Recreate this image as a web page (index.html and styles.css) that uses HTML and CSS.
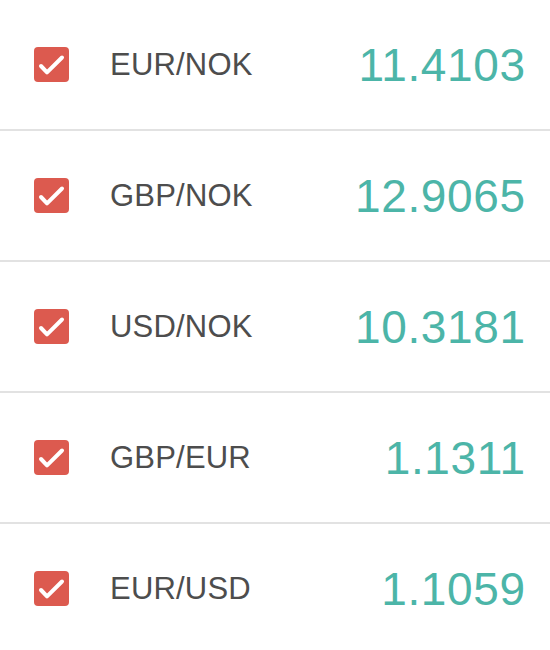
FILE: index.html
```html
<!DOCTYPE html>
<html>
<head>
<meta charset="utf-8">
<link rel="stylesheet" href="styles.css">
</head>
<body>
<ul class="rates">
  <li class="rate">
    <span class="check"><svg viewBox="0 0 35 35" width="35" height="35"><path d="M7 19 L13 25.3 L28 10.5" fill="none" stroke="#fff" stroke-width="4" stroke-linecap="round" stroke-linejoin="round"/></svg></span>
    <span class="pair">EUR/NOK</span>
    <span class="value">11.4103</span>
  </li>
  <li class="rate">
    <span class="check"><svg viewBox="0 0 35 35" width="35" height="35"><path d="M7 19 L13 25.3 L28 10.5" fill="none" stroke="#fff" stroke-width="4" stroke-linecap="round" stroke-linejoin="round"/></svg></span>
    <span class="pair">GBP/NOK</span>
    <span class="value">12.9065</span>
  </li>
  <li class="rate">
    <span class="check"><svg viewBox="0 0 35 35" width="35" height="35"><path d="M7 19 L13 25.3 L28 10.5" fill="none" stroke="#fff" stroke-width="4" stroke-linecap="round" stroke-linejoin="round"/></svg></span>
    <span class="pair">USD/NOK</span>
    <span class="value">10.3181</span>
  </li>
  <li class="rate">
    <span class="check"><svg viewBox="0 0 35 35" width="35" height="35"><path d="M7 19 L13 25.3 L28 10.5" fill="none" stroke="#fff" stroke-width="4" stroke-linecap="round" stroke-linejoin="round"/></svg></span>
    <span class="pair">GBP/EUR</span>
    <span class="value">1.1311</span>
  </li>
  <li class="rate">
    <span class="check"><svg viewBox="0 0 35 35" width="35" height="35"><path d="M7 19 L13 25.3 L28 10.5" fill="none" stroke="#fff" stroke-width="4" stroke-linecap="round" stroke-linejoin="round"/></svg></span>
    <span class="pair">EUR/USD</span>
    <span class="value">1.1059</span>
  </li>
</ul>
</body>
</html>
```
FILE: styles.css
```css
html, body {
  margin: 0;
  padding: 0;
  background: #fff;
}
body {
  font-family: "Liberation Sans", Arial, sans-serif;
}
.rates {
  list-style: none;
  margin: 0;
  padding: 0;
}
.rate {
  display: flex;
  align-items: center;
  height: 129px;
  padding: 0 25px 0 34px;
  border-bottom: 2px solid #e2e2e2;
}
.rate:last-child {
  border-bottom: none;
}
.check {
  width: 35px;
  height: 35px;
  border-radius: 4px;
  background: #dc5a4f;
  display: block;
  flex: none;
}
.check svg {
  display: block;
}
.pair {
  margin-left: 41px;
  font-size: 31px;
  letter-spacing: 0.2px;
  color: #4d4d4d;
  flex: 1;
}
.value {
  font-size: 46px;
  letter-spacing: 0.6px;
  margin-right: -0.6px;
  color: #4cb5a8;
}
```
